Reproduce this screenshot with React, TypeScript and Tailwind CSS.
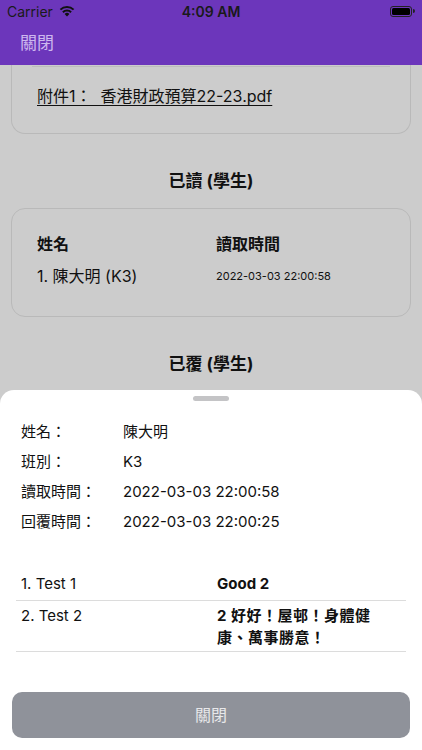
import React from "react";

const font = { fontFamily: 'Inter, "Noto Sans CJK TC", sans-serif' };

function Wifi() {
  return (
    <svg width="16" height="12" viewBox="0 0 16 12" className="ml-1.5">
      <path d="M8 11.5 L5.6 9 A3.4 3.4 0 0 1 10.4 9 Z" fill="#111" />
      <path d="M3.9 7.3 A5.8 5.8 0 0 1 12.1 7.3" stroke="#111" strokeWidth="2" fill="none" />
      <path d="M1.4 4.6 A9.4 9.4 0 0 1 14.6 4.6" stroke="#111" strokeWidth="2" fill="none" />
    </svg>
  );
}

function Battery() {
  return (
    <div className="flex items-center">
      <div className="flex h-[11px] w-[22px] items-center rounded-[3px] border border-[#222] p-[1px]">
        <div className="h-full w-full rounded-[1.5px] bg-black" />
      </div>
      <div className="ml-[1px] h-[4px] w-[1.5px] rounded-r bg-[#222]" />
    </div>
  );
}

const info = [
  ["姓名：", "陳大明"],
  ["班別：", "K3"],
  ["讀取時間：", "2022-03-03 22:00:58"],
  ["回覆時間：", "2022-03-03 22:00:25"],
];

export default function App() {
  return (
    <div className="relative h-[750px] w-[422px] overflow-hidden bg-[#cccccc] text-[#111]" style={font}>
      <div className="relative z-10 bg-[#6c36bb]">
        <div className="flex h-[22px] items-center justify-between px-[7px] text-[14px] text-[#1a1a1a]">
          <div className="flex w-[100px] items-center">
            <span>Carrier</span>
            <Wifi />
          </div>
          <span className="font-semibold">4:09 AM</span>
          <div className="flex w-[100px] justify-end">
            <Battery />
          </div>
        </div>
        <div className="flex h-[43px] items-center px-5 text-[17px] text-[#cdb8ee]">關閉</div>
      </div>

      <div className="px-[11px]">
        <div className="-mt-4 rounded-b-[14px] border border-t-0 border-[#b9b9b9] px-[25px] pb-[25px] pt-0">
          <div className="mb-[17px] ml-[-5px] mr-[-5px] h-[18px] border-b border-[#bcbcbc]" />
          <span className="text-[16px] underline underline-offset-[3px]">附件1：&nbsp; 香港財政預算22-23.pdf</span>
        </div>

        <div className="pt-[35px] text-center text-[17px] font-bold leading-[24px]">已讀 (學生)</div>

        <div className="mt-[15px] rounded-[14px] border border-[#b9b9b9] px-[25px] pb-[27px] pt-[22px]">
          <div className="grid grid-cols-2 text-[16px] font-bold leading-[26px]">
            <span>姓名</span>
            <span className="pl-[5px]">讀取時間</span>
          </div>
          <div className="mt-[6px] grid grid-cols-2 items-center leading-[26px]">
            <span className="text-[16px]">1. 陳大明 (K3)</span>
            <span className="pl-[5px] text-[11px]">2022-03-03 22:00:58</span>
          </div>
        </div>

        <div className="pt-[35px] text-center text-[17px] font-bold leading-[24px]">已覆 (學生)</div>
      </div>

      <div className="absolute inset-x-0 bottom-0 top-[390px] rounded-t-[14px] bg-white">
        <div className="mx-auto mt-[6px] h-[5px] w-[36px] rounded-full bg-[#c4c4c6]" />
        <div className="mt-[19px] flex flex-col gap-[6px] px-[21px] text-[15px]">
          {info.map(([k, v]) => (
            <div key={k} className="flex leading-[24px]">
              <span className="w-[102px]">{k}</span>
              <span>{v}</span>
            </div>
          ))}
        </div>

        <div className="mx-4 mt-[39px] text-[15px]">
          <div className="grid grid-cols-[201px_1fr] border-b border-[#dcdcdc] pb-[5px] leading-[22px]">
            <span className="pl-[5px]">1. Test 1</span>
            <span className="font-bold">Good 2</span>
          </div>
          <div className="grid grid-cols-[201px_1fr] border-b border-[#dcdcdc] pb-[2px] pt-[4px] leading-[22px]">
            <span className="pl-[5px]">2. Test 2</span>
            <span className="max-w-[172px] font-bold tracking-[0.5px]">2 好好！屋邨！身體健康、萬事勝意！</span>
          </div>
        </div>

        <div className="mx-3 mt-[40px] flex h-[46px] items-center justify-center rounded-[10px] bg-[#8f929a] text-[16px] text-[#e8e8ea]">
          關閉
        </div>
      </div>
    </div>
  );
}
